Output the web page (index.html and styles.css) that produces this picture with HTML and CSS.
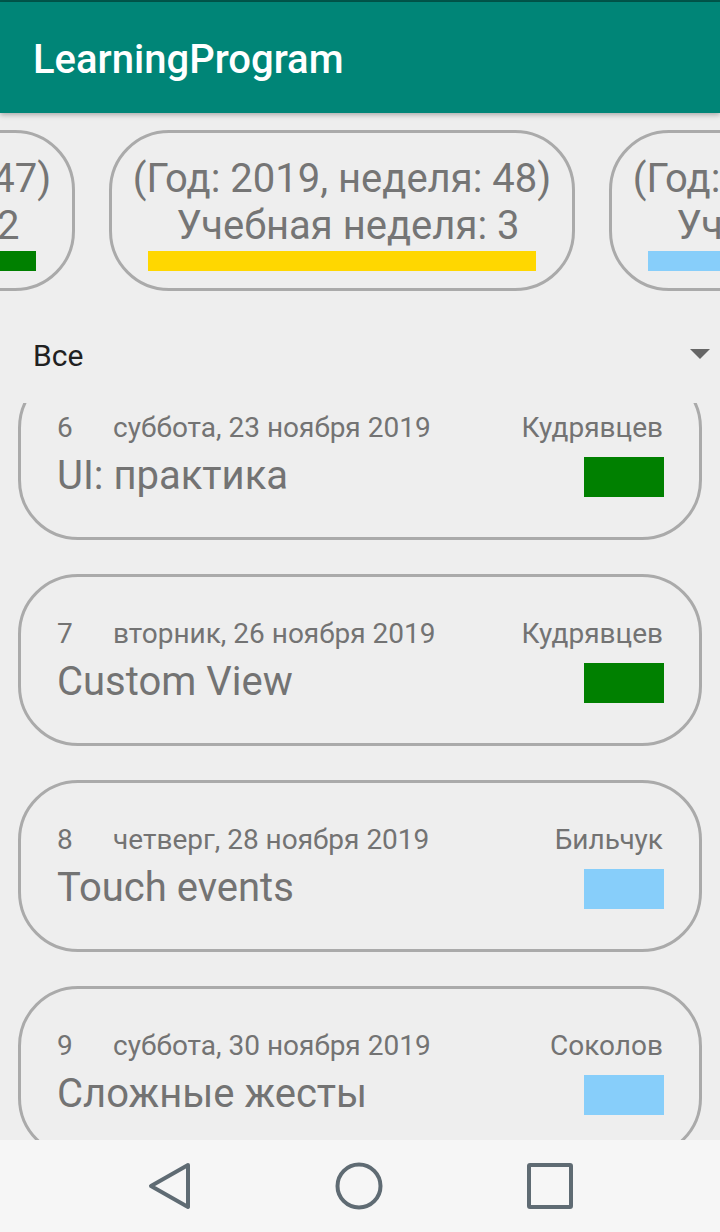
FILE: index.html
```html
<!DOCTYPE html>
<html lang="ru">
<head>
<meta charset="utf-8">
<title>LearningProgram</title>
<link rel="stylesheet" href="styles.css">
</head>
<body>
<div class="screen">
  <div class="status"></div>
  <header class="appbar"><span class="appbar-title">LearningProgram</span></header>

  <div class="weeks">
    <div class="week week-first">
      <div class="week-line">(Год: 2019, неделя: 47)</div>
      <div class="week-line week-line-sub">Учебная неделя: 2</div>
      <div class="week-bar bar-green"></div>
    </div>
    <div class="week">
      <div class="week-line">(Год: 2019, неделя: 48)</div>
      <div class="week-line week-line-sub">Учебная неделя: 3</div>
      <div class="week-bar bar-gold"></div>
    </div>
    <div class="week">
      <div class="week-line">(Год: 2019, неделя: 49)</div>
      <div class="week-line week-line-sub">Учебная неделя: 4</div>
      <div class="week-bar bar-blue"></div>
    </div>
  </div>

  <div class="spinner">
    <span class="spinner-text">Все</span>
    <span class="spinner-arrow"></span>
  </div>

  <div class="list">
    <div class="list-inner">
      <div class="card">
        <div class="card-top">
          <span class="card-num">6</span>
          <span class="card-date">суббота, 23 ноября 2019</span>
          <span class="card-author">Кудрявцев</span>
        </div>
        <div class="card-main">
          <span class="card-title">UI: практика</span>
          <span class="card-color bar-green"></span>
        </div>
      </div>
      <div class="card">
        <div class="card-top">
          <span class="card-num">7</span>
          <span class="card-date">вторник, 26 ноября 2019</span>
          <span class="card-author">Кудрявцев</span>
        </div>
        <div class="card-main">
          <span class="card-title">Custom View</span>
          <span class="card-color bar-green"></span>
        </div>
      </div>
      <div class="card">
        <div class="card-top">
          <span class="card-num">8</span>
          <span class="card-date">четверг, 28 ноября 2019</span>
          <span class="card-author">Бильчук</span>
        </div>
        <div class="card-main">
          <span class="card-title">Touch events</span>
          <span class="card-color bar-blue"></span>
        </div>
      </div>
      <div class="card">
        <div class="card-top">
          <span class="card-num">9</span>
          <span class="card-date">суббота, 30 ноября 2019</span>
          <span class="card-author">Соколов</span>
        </div>
        <div class="card-main">
          <span class="card-title">Сложные жесты</span>
          <span class="card-color bar-blue"></span>
        </div>
      </div>
    </div>
  </div>

  <nav class="navbar">
    <svg class="nav-icon" viewBox="0 0 48 48" width="48" height="48"><path d="M44 3 L7 24 L44 45 Z" fill="none" stroke="#5f6b73" stroke-width="4" stroke-linejoin="round"/></svg>
    <svg class="nav-icon" viewBox="0 0 48 48" width="48" height="48"><ellipse cx="24" cy="24" rx="21.5" ry="21.5" fill="none" stroke="#5f6b73" stroke-width="4"/></svg>
    <svg class="nav-icon" viewBox="0 0 48 48" width="48" height="48"><rect x="3" y="3" width="42" height="42" rx="1" fill="none" stroke="#5f6b73" stroke-width="4"/></svg>
  </nav>
</div>
</body>
</html>
```

FILE: styles.css
```css
* { box-sizing: border-box; }
html, body {
  margin: 0;
  padding: 0;
  background: #eeeeee;
}
body {
  font-family: Roboto, "Noto Sans", sans-serif;
}
.screen {
  width: 720px;
  height: 1232px;
  overflow: hidden;
  display: flex;
  flex-direction: column;
  background: #eeeeee;
}
.status {
  height: 2px;
  background: #00574b;
  flex: none;
}
.appbar {
  flex: none;
  height: 111px;
  background: #008577;
  display: flex;
  align-items: center;
  padding: 4px 0 0 33px;
  box-shadow: 0 2px 5px rgba(0,0,0,0.28);
  position: relative;
  z-index: 2;
}
.appbar-title {
  color: #ffffff;
  font-size: 40px;
  font-weight: 500;
  line-height: normal;
}
.weeks {
  flex: none;
  display: flex;
  gap: 34px;
  margin-top: 17px;
  height: 161px;
}
.week {
  flex: none;
  width: 466px;
  height: 161px;
  border: 3px solid #aaaaaa;
  border-radius: 60px;
  padding-top: 22px;
  display: flex;
  flex-direction: column;
  align-items: center;
}
.week-first {
  margin-left: -391px;
}
.week-line {
  font-size: 40px;
  line-height: normal;
  color: #757575;
  white-space: nowrap;
}
.week-line-sub {
  padding-left: 12px;
}
.week-bar {
  width: 388px;
  height: 20px;
  margin-top: 2px;
  flex: none;
}
.bar-green { background: #008000; }
.bar-gold { background: #ffd700; }
.bar-blue { background: #87cefa; }

.spinner {
  flex: none;
  display: flex;
  align-items: center;
  justify-content: space-between;
  padding: 47px 10px 30px 33px;
}
.spinner-text {
  font-size: 30px;
  line-height: normal;
  color: #212121;
}
.spinner-arrow {
  width: 0;
  height: 0;
  border-left: 10px solid transparent;
  border-right: 10px solid transparent;
  border-top: 10px solid #666666;
  margin-bottom: 4px;
}
.list {
  flex: none;
  height: 737px;
  overflow: hidden;
}
.list-inner {
  margin-top: -35px;
  display: flex;
  flex-direction: column;
  gap: 34px;
}
.card {
  flex: none;
  margin: 0 18px;
  height: 172px;
  border: 3px solid #aaaaaa;
  border-radius: 60px;
  padding: 40px 36px 0 36px;
  color: #737373;
}
.card-top {
  display: flex;
  font-size: 28px;
  line-height: normal;
  white-space: nowrap;
}
.card-num {
  width: 56px;
  flex: none;
}
.card-date {
  flex: 1;
}
.card-author {
  flex: none;
}
.card-main {
  display: flex;
  align-items: center;
  justify-content: space-between;
  margin-top: 8px;
}
.card-title {
  font-size: 40px;
  line-height: normal;
  white-space: nowrap;
}
.card-color {
  width: 80px;
  height: 40px;
  margin-top: 3px;
  margin-right: -1px;
  flex: none;
}
.navbar {
  flex: none;
  height: 92px;
  background: #f6f6f6;
  display: flex;
  align-items: center;
  gap: 143px;
  padding-left: 144px;
  position: relative;
  z-index: 2;
}
.nav-icon {
  display: block;
  flex: none;
}
```
